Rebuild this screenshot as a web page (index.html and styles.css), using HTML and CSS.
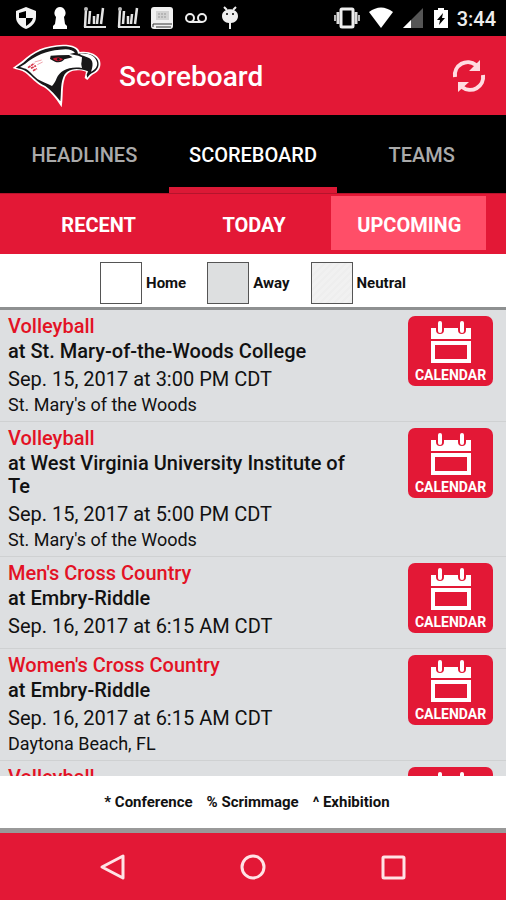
FILE: index.html
```html
<!DOCTYPE html>
<html lang="en">
<head>
    <meta charset="UTF-8">
    <meta name="viewport" content="width=device-width, initial-scale=1.0">
    <title>Scoreboard</title>
    <link rel="stylesheet" href="styles.css">
</head>
<body>
    <!-- Icons used more than once -->
    <svg class="defs" aria-hidden="true">
        <symbol id="chart" viewBox="0 0 24 24">
            <path d="M2 21H24" stroke="#e4e4e4" stroke-width="2"/>
            <path d="M4 3L3 21M8 5L7 18M12 10V18M16 8L15 18M21 2L19 18" fill="none" stroke="#e4e4e4" stroke-width="2.5"/>
            <circle cx="4" cy="3" r="2" fill="#bbb"/>
        </symbol>
        <symbol id="calendar" viewBox="0 0 40 44">
            <path d="M0 8H5V10a4 4 0 0 0 8 0V8H27V10a4 4 0 0 0 8 0V8H40V19H0Z" fill="#fff"/>
            <rect x="7" y="1" width="4" height="12" rx="2" fill="#fff"/>
            <rect x="29" y="1" width="4" height="12" rx="2" fill="#fff"/>
            <path fill-rule="evenodd" d="M0 21H40V43H0ZM4 25V39H36V25Z" fill="#fff"/>
        </symbol>
    </svg>

    <div class="status-bar">
        <div class="status-icons">
            <svg viewBox="0 0 24 24"><path d="M12 1L22 5V11C22 17 17 21 12 23C7 21 2 17 2 11V5Z" fill="#f4f4f4"/><path d="M12 5V12H5V7ZM12 12H19C18 16 15 18 12 20Z" fill="#000"/></svg>
            <svg viewBox="0 0 24 24"><path d="M12 1A6 6 0 0 1 16 11L17 18L19 20V23H5V20L7 18L8 11A6 6 0 0 1 12 1Z" fill="#fff"/></svg>
            <svg><use href="#chart"/></svg>
            <svg><use href="#chart"/></svg>
            <svg viewBox="0 0 24 24"><rect x="1" y="1" width="22" height="22" rx="3" fill="#f0f0f0"/><path d="M6 5H19V14H6Z" fill="#d2d2d2"/><path d="M8 8H17M8 11H17" stroke="#999" stroke-dasharray="2 1"/><path d="M3 18H22M6 21H21" stroke="#333"/><path d="M3 18V21" stroke="#333"/></svg>
            <svg viewBox="0 0 24 24"><g fill="none" stroke="#eee" stroke-width="2"><circle cx="6" cy="12" r="4"/><circle cx="18" cy="12" r="4"/><path d="M6 16H18"/></g></svg>
            <svg viewBox="0 0 24 24"><path d="M6 1L9 4M18 1L15 4" stroke="#eee" stroke-width="2"/><path d="M4 10C4 1 20 1 20 10C20 14 17 17 13 17V23H11V17C7 17 4 14 4 10Z" fill="#eee"/><circle cx="9" cy="8" r="1"/><circle cx="15" cy="8" r="1"/></svg>
        </div>
        <div class="status-info">
            <svg class="vibrate" viewBox="0 0 28 24"><rect x="8" y="3" width="12" height="18" rx="1" fill="none" stroke="#eee" stroke-width="3"/><path d="M5 6V18M23 6V18" stroke="#ddd" stroke-width="3"/><path d="M2 9V15M26 9V15" stroke="#bbb" stroke-width="2"/></svg>
            <svg viewBox="0 0 24 24"><path d="M0 6Q12 -3 24 6L12 22Z" fill="#fff"/></svg>
            <svg viewBox="0 0 24 24"><path d="M2 22L22 2V22Z" fill="#555"/><path d="M2 22L10 14V22Z" fill="#fff"/></svg>
            <svg class="battery" viewBox="0 0 16 24"><path d="M1 4H5V2H11V4H15V22H1Z" fill="#fff"/><path d="M10 7L4 14H7L6 19L12 12H9Z" fill="#000"/></svg>
            <span class="time">3:44</span>
        </div>
    </div>

    <header class="app-bar">
        <svg class="logo" viewBox="0 0 300 228" role="img" aria-label="Cardinal logo">
            <path d="M14 90L42 70C75 38 110 22 165 20C195 20 212 28 215 42C240 38 265 46 275 65C280 78 278 95 262 105C250 110 244 120 238 126L230 120L234 101C200 90 176 102 170 122C162 145 166 175 161 208C140 175 126 160 108 148C82 135 70 118 52 104C40 96 28 96 14 90Z" fill="#fff"/>
            <path d="M23 89L46 74C78 43 112 27 165 25C193 25 208 32 210 47C235 42 260 49 269 66C274 78 273 92 258 102C247 106 243 113 238 119L236 110L240 100C200 84 172 96 165 120C157 142 160 165 157 190C142 170 129 156 112 144C86 131 74 115 56 101C44 92 34 92 23 89Z" fill="#171719"/>
            <path d="M36 87L52 77C82 52 115 38 155 35C181 31 193 35 201 44L185 48L211 53L222 58L220 80L222 90C184 84 155 98 146 121C142 132 137 139 132 144C121 138 105 133 89 124C78 116 70 104 59 96C51 90 43 90 36 87Z" fill="#fff"/>
            <path d="M128 53L151 52L183 51L194 58L169 64C163 73 151 75 141 71L126 63Z" fill="#171719"/>
            <path d="M134 62C144 57 157 58 165 64C157 71 143 72 134 62Z" fill="#c9142f"/>
            <circle cx="151" cy="64" r="4" fill="#171719"/>
            <path d="M214 47C240 43 264 53 267 73C270 85 261 97 249 101C256 83 256 66 243 60C233 54 223 54 214 47Z" fill="#fff"/>
            <path d="M224 58C247 56 258 73 247 98L225 90L221 77Z" fill="#171719"/>
            <path d="M60 89L79 76M69 91L84 83M75 98L87 92" fill="none" stroke="#d8344a" stroke-width="5" stroke-dasharray="9 2"/>
            <path d="M80 72L101 66M88 80L104 72" stroke="#efa5ae" stroke-width="3"/>
        </svg>
        <h1>Scoreboard</h1>
        <button class="refresh" aria-label="Refresh">
            <svg viewBox="0 0 34 34"><path d="M3 18A13 13 0 0 1 24 6M31 16A13 13 0 0 1 10 28" fill="none" stroke="#ffdce1" stroke-width="4"/><path d="M28 1V12H17ZM6 33V23H17Z" fill="#ffdce1"/></svg>
        </button>
    </header>

    <nav class="tabs">
        <a href="#">HEADLINES</a>
        <a href="#" class="active">SCOREBOARD</a>
        <a href="#">TEAMS</a>
    </nav>

    <div class="filters">
        <button>RECENT</button>
        <button>TODAY</button>
        <button class="active">UPCOMING</button>
    </div>

    <div class="legend">
        <span class="key"><i class="swatch"></i>Home</span>
        <span class="key"><i class="swatch away"></i>Away</span>
        <span class="key"><i class="swatch neutral"></i>Neutral</span>
    </div>

    <main class="games">
        <article class="game">
            <div class="details">
                <h2>Volleyball</h2>
                <h3>at St. Mary-of-the-Woods College</h3>
                <p class="date">Sep. 15, 2017 at 3:00 PM CDT</p>
                <p class="place">St. Mary's of the Woods</p>
            </div>
            <button class="calendar"><svg><use href="#calendar"/></svg>CALENDAR</button>
        </article>
        <article class="game">
            <div class="details">
                <h2>Volleyball</h2>
                <h3>at West Virginia University Institute of Te</h3>
                <p class="date">Sep. 15, 2017 at 5:00 PM CDT</p>
                <p class="place">St. Mary's of the Woods</p>
            </div>
            <button class="calendar"><svg><use href="#calendar"/></svg>CALENDAR</button>
        </article>
        <article class="game">
            <div class="details">
                <h2>Men's Cross Country</h2>
                <h3>at Embry-Riddle</h3>
                <p class="date">Sep. 16, 2017 at 6:15 AM CDT</p>
            </div>
            <button class="calendar"><svg><use href="#calendar"/></svg>CALENDAR</button>
        </article>
        <article class="game">
            <div class="details">
                <h2>Women's Cross Country</h2>
                <h3>at Embry-Riddle</h3>
                <p class="date">Sep. 16, 2017 at 6:15 AM CDT</p>
                <p class="place">Daytona Beach, FL</p>
            </div>
            <button class="calendar"><svg><use href="#calendar"/></svg>CALENDAR</button>
        </article>
        <article class="game">
            <div class="details">
                <h2>Volleyball</h2>
            </div>
            <button class="calendar" aria-label="Calendar"><svg><use href="#calendar"/></svg></button>
        </article>
    </main>

    <footer class="notes">
        <span>* Conference</span>
        <span>% Scrimmage</span>
        <span>^ Exhibition</span>
    </footer>

    <div class="nav-bar">
        <button aria-label="Back"><svg viewBox="0 0 28 28"><path d="M24 3V25L3 14Z"/></svg></button>
        <button aria-label="Home"><svg viewBox="0 0 28 28"><circle cx="14" cy="14" r="11"/></svg></button>
        <button aria-label="Recent apps"><svg viewBox="0 0 28 28"><rect x="4" y="4" width="21" height="21" rx="1"/></svg></button>
    </div>
</body>
</html>
```
FILE: styles.css
```css
* {
    box-sizing: border-box;
}
body {
    display: flex;
    flex-direction: column;
    height: 100vh;
    margin: 0;
    background: #fff;
    color: #111;
    font-family: Roboto, sans-serif;
}
h1, h2, h3, p {
    margin: 0;
}
button {
    padding: 0;
    border: none;
    background: none;
    color: #fff;
    font-family: inherit;
    cursor: pointer;
}
svg {
    display: block;
}
.defs {
    position: absolute;
    width: 0;
    height: 0;
}

/* Status bar */
.status-bar {
    display: flex;
    flex: none;
    justify-content: space-between;
    align-items: center;
    height: 36px;
    padding: 0 10px 0 14px;
    background: #000;
    color: #eee;
}
.status-icons, .status-info {
    display: flex;
    align-items: center;
    gap: 10px;
}
.status-bar svg {
    width: 24px;
    height: 24px;
}
.status-bar .vibrate {
    width: 28px;
}
.status-bar .battery {
    width: 16px;
}
.status-info {
    gap: 8px;
}
.time {
    padding-top: 2px;
    font-size: 20px;
    font-weight: 500;
}

/* App bar */
.app-bar {
    display: flex;
    flex: none;
    align-items: center;
    height: 79px;
    padding: 0 20px 0 8px;
    background: #e31836;
    color: #fff;
}
.logo {
    width: 100px;
    height: 76px;
}
.app-bar h1 {
    flex: 1;
    padding: 2px 0 0 11px;
    font-size: 28px;
    font-weight: 500;
}
.refresh svg {
    width: 34px;
    height: 34px;
}

/* Main tabs */
.tabs {
    display: grid;
    flex: none;
    grid-template-columns: repeat(3, 1fr);
    height: 78px;
    background: #000;
}
.tabs a {
    display: flex;
    align-items: center;
    justify-content: center;
    padding-top: 8px;
    border-bottom: 6px solid #000;
    color: #aaa;
    font-size: 20px;
    font-weight: 500;
    text-decoration: none;
}
.tabs .active {
    border-color: #dc1936;
    color: #fff;
}

/* Recent, today and upcoming */
.filters {
    display: grid;
    flex: none;
    grid-template-columns: repeat(3, 1fr);
    height: 61px;
    padding: 2px 20px 4px;
    background: #e31836;
    border-top: 1px solid #b5142c;
}
.filters button {
    padding: 3px 0 0 2px;
    font-size: 20px;
    font-weight: 700;
}
.filters .active {
    background: #ff4e68;
}

/* Legend */
.legend {
    display: flex;
    flex: none;
    align-items: center;
    justify-content: center;
    gap: 21px;
    height: 56px;
    padding-top: 5px;
    border-bottom: 3px solid #8e9091;
}
.key {
    display: flex;
    align-items: center;
    gap: 4px;
    font-size: 15px;
    font-weight: 700;
}
.swatch {
    width: 42px;
    height: 42px;
    border: 1px solid #555;
    background: #fff;
}
.away {
    background: #dddfe0;
}
.neutral {
    background: repeating-linear-gradient(135deg, #f1f1f1 0 3px, #eee 3px 5px);
}

/* Game list */
.games {
    flex: 1;
    min-height: 0;
    overflow: hidden;
    background: #dddfe1;
}
.game {
    display: flex;
    justify-content: space-between;
    align-items: flex-start;
    padding: 2px 13px 3px 8px;
    border-bottom: 1px solid #cfd1d2;
}
.details {
    width: 72%;
}
.game h2 {
    color: #e31225;
    font-size: 20px;
    font-weight: 500;
    line-height: 28px;
}
.game h3 {
    margin-bottom: 3px;
    font-size: 20px;
    font-weight: 500;
    line-height: 23px;
}
.date {
    font-size: 20px;
    line-height: 26px;
}
.place {
    font-size: 18px;
    line-height: 26px;
}
.calendar {
    display: flex;
    flex: none;
    flex-direction: column;
    align-items: center;
    width: 85px;
    height: 70px;
    margin: 4px 0 12px;
    padding-top: 4px;
    border-radius: 7px;
    background: #e31836;
    font-size: 14px;
    font-weight: 700;
    line-height: 22px;
}
.calendar svg {
    width: 40px;
    height: 44px;
}

/* Notes */
.notes {
    display: flex;
    flex: none;
    align-items: center;
    justify-content: center;
    gap: 14px;
    height: 57px;
    padding-right: 12px;
    border-bottom: 5px solid #999;
    font-size: 15px;
    font-weight: 700;
}

/* Navigation bar */
.nav-bar {
    display: flex;
    flex: none;
    align-items: center;
    justify-content: center;
    gap: 112px;
    height: 67px;
    background: #e31836;
}
.nav-bar svg {
    width: 28px;
    height: 28px;
    fill: none;
    stroke: #ffe3e6;
    stroke-width: 3;
    stroke-linejoin: round;
}
```
